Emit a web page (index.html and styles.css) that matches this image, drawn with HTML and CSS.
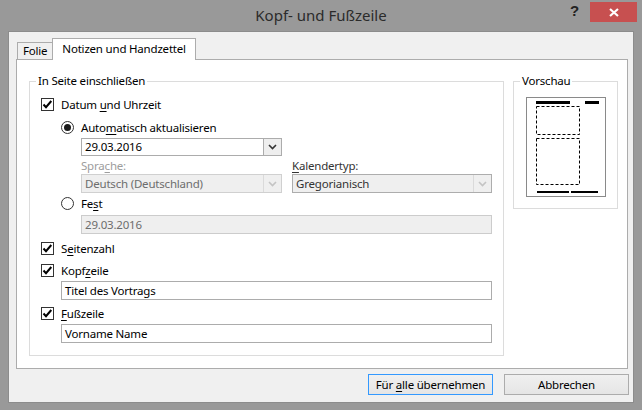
FILE: index.html
```html
<!DOCTYPE html>
<html lang="de">
<head>
  <meta charset="UTF-8" />
  <title>Kopf- und Fußzeile</title>
  <link rel="stylesheet" href="styles.css">
</head>
<body>
  <div class="window">
    <div class="titlebar">
      <div class="title">Kopf- und Fußzeile</div>
      <div class="controls">
        <span class="help">?</span>
        <span class="close">
          <svg width="10" height="9" viewBox="0 0 10 9"><path d="M1 1 L9 8 M9 1 L1 8" stroke="#fff" stroke-width="2.2" /></svg>
        </span>
      </div>
    </div>

    <div class="client">
      <div class="tabs">
        <div class="tab">Folie</div>
        <div class="tab active">Notizen und Handzettel</div>
      </div>

      <div class="panel">
        <fieldset class="group main">
          <legend>In Seite einschließen</legend>

          <div class="row">
            <span class="check"><svg width="11" height="11" viewBox="0 0 11 11"><path d="M1.5 5.5 L4 8.2 L9.3 2" fill="none" stroke="#000" stroke-width="2" /></svg></span>
            <span>Datum <u>u</u>nd Uhrzeit</span>
          </div>

          <div class="row indent1 gap3">
            <span class="radio on"></span>
            <span>Auto<u>m</u>atisch aktualisieren</span>
          </div>

          <div class="combo indent2 gap1 w201">
            <span class="value">29.03.2016</span>
            <span class="drop"><svg width="9" height="6" viewBox="0 0 9 6"><path d="M1 1 L4.5 4.5 L8 1" fill="none" stroke="#333" stroke-width="1.6" /></svg></span>
          </div>

          <div class="pair indent2 gap2">
            <span class="label off">Spra<u>c</u>he:</span>
            <span class="label"><u>K</u>alendertyp:</span>
          </div>

          <div class="pair indent2">
            <div class="combo disabled">
              <span class="value">Deutsch (Deutschland)</span>
              <span class="drop"><svg width="9" height="6" viewBox="0 0 9 6"><path d="M1 1 L4.5 4.5 L8 1" fill="none" stroke="#c4c4c4" stroke-width="1.6" /></svg></span>
            </div>
            <div class="combo grey">
              <span class="value">Gregorianisch</span>
              <span class="drop"><svg width="9" height="6" viewBox="0 0 9 6"><path d="M1 1 L4.5 4.5 L8 1" fill="none" stroke="#c4c4c4" stroke-width="1.6" /></svg></span>
            </div>
          </div>

          <div class="row indent1">
            <span class="radio"></span>
            <span>Fe<u>s</u>t</span>
          </div>

          <div class="textbox disabled indent2 gap2 w411">29.03.2016</div>

          <div class="row gap4">
            <span class="check"><svg width="11" height="11" viewBox="0 0 11 11"><path d="M1.5 5.5 L4 8.2 L9.3 2" fill="none" stroke="#000" stroke-width="2" /></svg></span>
            <span>S<u>e</u>itenzahl</span>
          </div>

          <div class="row gap2">
            <span class="check"><svg width="11" height="11" viewBox="0 0 11 11"><path d="M1.5 5.5 L4 8.2 L9.3 2" fill="none" stroke="#000" stroke-width="2" /></svg></span>
            <span>Kopf<u>z</u>eile</span>
          </div>

          <div class="textbox indent1 gap1 w431">Titel des Vortrags</div>

          <div class="row gap3">
            <span class="check"><svg width="11" height="11" viewBox="0 0 11 11"><path d="M1.5 5.5 L4 8.2 L9.3 2" fill="none" stroke="#000" stroke-width="2" /></svg></span>
            <span><u>F</u>ußzeile</span>
          </div>

          <div class="textbox indent1 gap1 w431">Vorname Name</div>
        </fieldset>

        <fieldset class="group preview">
          <legend>Vorschau</legend>
          <svg width="80" height="100" viewBox="0 0 80 100">
            <rect x="0.5" y="0.5" width="79" height="99" fill="#fff" stroke="#8a8a8a" />
            <rect x="10" y="4" width="34" height="3" fill="#000" />
            <rect x="59" y="4" width="14" height="3" fill="#000" />
            <rect x="10.5" y="9.5" width="43" height="28" fill="none" stroke="#000" stroke-dasharray="3 2" />
            <rect x="10.5" y="41.5" width="43" height="46" fill="none" stroke="#000" stroke-dasharray="3 2" />
            <rect x="11" y="94" width="32" height="2" fill="#000" />
            <rect x="45" y="94" width="27" height="2" fill="#000" />
          </svg>
        </fieldset>
      </div>

      <div class="buttons">
        <button class="btn default">Für <u>a</u>lle übernehmen</button>
        <button class="btn">Abbrechen</button>
      </div>
    </div>
  </div>
</body>
</html>
```

FILE: styles.css
```css
* {
  box-sizing: border-box;
}
body {
  margin: 0;
  background: #999999;
  font-family: 'Noto Sans', 'Open Sans', sans-serif;
  font-size: 11.5px;
  letter-spacing: -0.2px;
  color: #000;
}
.window {
  width: 642px;
  height: 410px;
  display: flex;
  flex-direction: column;
}
.titlebar {
  height: 31px;
  flex: none;
  display: grid;
  grid-template-columns: 1fr auto 1fr;
}
.title {
  grid-column: 2;
  font-size: 15px;
  letter-spacing: 0;
  line-height: 31px;
  color: #2b2b2b;
}
.controls {
  justify-self: end;
  display: flex;
  align-items: flex-start;
}
.help {
  font-family: 'Liberation Sans', sans-serif;
  font-weight: bold;
  font-size: 15px;
  line-height: 20px;
  color: #222;
  margin: 1px 11px 0 0;
}
.close {
  width: 47px;
  height: 20px;
  margin: 2px 5px 0 0;
  background: #c75050;
  display: flex;
  align-items: center;
  justify-content: center;
}
.client {
  flex: 1;
  margin: 0 8px 7px 8px;
  border: 1px solid #8c8c8c;
  background: #f0f0f0;
  padding: 6px 4px 0 7px;
  display: flex;
  flex-direction: column;
}
.tabs {
  display: flex;
  align-items: flex-end;
  margin-left: 1px;
}
.tab {
  height: 17px;
  padding: 0 5px;
  border: 1px solid #acacac;
  border-bottom: none;
  background: #f0f0f0;
  line-height: 16px;
}
.tab.active {
  height: 22px;
  margin: 0 0 -1px -1px;
  padding: 2px 9px 0;
  background: #fff;
  position: relative;
  z-index: 1;
}
.panel {
  height: 310px;
  margin-right: 1px;
  border: 1px solid #acacac;
  background: #fff;
  display: flex;
  align-items: flex-start;
  gap: 9px;
  padding: 13px 0 0 12px;
}
.group {
  margin: 0;
  border: 1px solid #dcdcdc;
  min-width: 0;
}
.group legend {
  padding: 0 2px;
  margin-left: -5px;
  line-height: 16px;
}
.main {
  width: 475px;
  height: 283px;
  padding: 5px 10px 0 11px;
}
.preview {
  width: 105px;
  height: 136px;
  padding: 8px 11px 11px 12px;
}
.preview legend {
  margin-left: -6px;
}
.preview svg {
  display: block;
}
.row {
  height: 20px;
  display: flex;
  align-items: center;
  gap: 7px;
}
.indent1 { margin-left: 20px; }
.indent2 { margin-left: 40px; }
.gap1 { margin-top: 1px; }
.gap2 { margin-top: 2px; }
.gap3 { margin-top: 3px; }
.gap4 { margin-top: 4px; }
.w201 { width: 201px; }
.w411 { width: 411px; }
.w431 { width: 431px; }
u {
  text-decoration-thickness: 1px;
  text-underline-offset: 2px;
}
.check {
  width: 13px;
  height: 13px;
  border: 1px solid #333;
  background: #fff;
  display: flex;
  align-items: center;
  justify-content: center;
}
.radio {
  width: 13px;
  height: 13px;
  border: 1px solid #333;
  border-radius: 50%;
  background: #fff;
  display: flex;
  align-items: center;
  justify-content: center;
}
.radio.on::after {
  content: '';
  width: 7px;
  height: 7px;
  border-radius: 50%;
  background: #1a1a1a;
}
.combo {
  height: 18px;
  border: 1px solid #acacac;
  background: #fff;
  display: flex;
  align-items: stretch;
}
.combo .value {
  flex: 1;
  padding-left: 3px;
  line-height: 16px;
}
.combo .drop {
  width: 18px;
  border-left: 1px solid #acacac;
  background: #eeeeee;
  display: flex;
  align-items: center;
  justify-content: center;
}
.pair {
  display: grid;
  grid-template-columns: 201px 200px;
  gap: 10px;
}
.label {
  line-height: 16px;
  color: #333;
}
.label.off {
  color: #9d9d9d;
}
.pair .combo {
  height: 19px;
  background: #efefef;
}
.combo.disabled {
  border-color: #d0d0d0;
  color: #6d6d6d;
}
.combo.grey {
  border-color: #adadad;
  color: #333;
}
.pair .combo .value {
  line-height: 17px;
}
.pair .combo .drop {
  background: #efefef;
  border-left-color: #dadada;
}
.textbox {
  height: 19px;
  border: 1px solid #acacac;
  background: #fff;
  padding-left: 3px;
  line-height: 17px;
}
.textbox.disabled {
  background: #efefef;
  border-color: #cccccc;
  color: #6d6d6d;
}
.buttons {
  display: flex;
  justify-content: flex-end;
  gap: 11px;
  margin-top: 5px;
}
.btn {
  width: 125px;
  height: 21px;
  padding: 0;
  font: inherit;
  letter-spacing: inherit;
  color: #000;
  border: 1px solid #acacac;
  background: linear-gradient(#f0f0f0, #e5e5e5);
}
.btn.default {
  border-color: #3399ff;
}
```
